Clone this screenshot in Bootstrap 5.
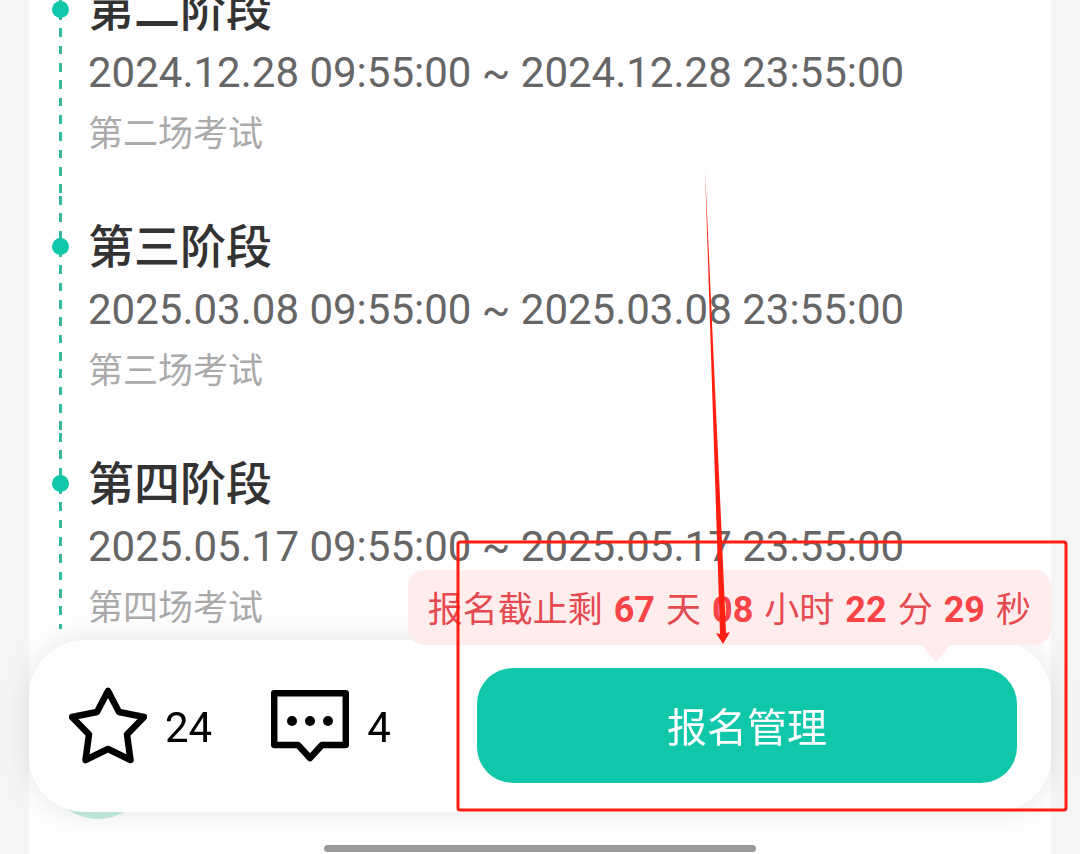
<!DOCTYPE html>
<html lang="zh-CN">
<head>
<meta charset="utf-8">
<meta name="viewport" content="width=device-width, initial-scale=1">
<title>报名管理</title>
<link rel="stylesheet" href="https://cdn.jsdelivr.net/npm/bootstrap@5.3.0/dist/css/bootstrap.min.css">
<style>
  :root { --brand: #10c7a9; --gutter: 29px; --alert: #f94346; --mark-red: #ff1f12; }
  body { background: #f5f5f6; font-family: Roboto, "Noto Sans CJK SC", sans-serif; overflow: hidden; }
  .panel { margin: 0 var(--gutter); background: #fefefe; }
  .stages { margin-top: -41px; }
  .stage { position: relative; padding: 20px 0 31px 59px; }
  .stage:last-child { padding-bottom: 0; }
  .stage::before {
    content: ""; position: absolute; left: 30px; top: 0; bottom: 0; width: 3px;
    background: repeating-linear-gradient(#35b89c 0 9px, transparent 9px 17px, #35b89c 17px 26px,
      transparent 26px 35px, #35b89c 35px 43px, transparent 43px 52px);
  }
  .stage:last-child::before { bottom: 10px; }
  .stage::after {
    content: ""; position: absolute; left: 23px; top: 42px; width: 17px; height: 17px;
    border-radius: 50%; background: var(--brand);
  }
  .stage h2 { font-size: 46px; line-height: 62px; font-weight: 500; color: #333; }
  .stage-time { font-size: 42px; line-height: 64px; color: #666; }
  .stage-note { font-size: 35px; line-height: 60px; color: #aaa; }
  .next-section { padding: 76px 0 0 17px; }
  .next-dot { width: 104px; height: 104px; background: #c4eddf; }
  .action-bar {
    margin: 0 var(--gutter) 42px; padding: 28px 34px 29px 40px; border-radius: 56px;
    background: #fefefe; box-shadow: 0 0 28px rgba(0, 0, 0, .1);
  }
  .action { gap: 18px; font-size: 42px; line-height: 64px; color: #000; }
  .action span { padding-top: 5px; }
  .action svg { width: 78px; height: 78px; fill: none; stroke: #000; stroke-width: 6.5; stroke-linejoin: round; }
  .action-set { gap: 59px; margin-right: 86px; }
  .btn-manage {
    --bs-btn-bg: var(--brand); --bs-btn-color: #fff; --bs-btn-hover-bg: #0eb79b; --bs-btn-hover-color: #fff;
    --bs-btn-border-radius: 36px; --bs-btn-border-width: 0; --bs-btn-font-size: 40px;
    height: 115px; padding: 6px 0 0;
  }
  .countdown {
    bottom: 167px; right: 0; padding: 6px 20px 0; gap: 11px; border-radius: 16px;
    background: #ffedee; color: #e54a50; font-size: 35px; line-height: 69px; white-space: nowrap;
  }
  .countdown b { color: var(--alert); font-size: 36px; }
  .countdown::after {
    content: ""; position: absolute; top: 100%; right: 101px;
    border: solid transparent; border-width: 18px 14px 0; border-top-color: #ffedee;
  }
  .callout { right: -17px; bottom: 0; width: 612px; height: 646px; pointer-events: none; }
  .home-indicator { width: 40%; height: 7px; bottom: 2px; background: #999; }
</style>
</head>
<body>
<main class="panel min-vh-100 d-flex flex-column">
  <ol class="stages list-unstyled mb-0">
    <li class="stage">
      <h2 class="mb-0">第二阶段</h2>
      <div class="stage-time">2024.12.28 09:55:00 ~ 2024.12.28 23:55:00</div>
      <div class="stage-note">第二场考试</div>
    </li>
    <li class="stage">
      <h2 class="mb-0">第三阶段</h2>
      <div class="stage-time">2025.03.08 09:55:00 ~ 2025.03.08 23:55:00</div>
      <div class="stage-note">第三场考试</div>
    </li>
    <li class="stage">
      <h2 class="mb-0">第四阶段</h2>
      <div class="stage-time">2025.05.17 09:55:00 ~ 2025.05.17 23:55:00</div>
      <div class="stage-note">第四场考试</div>
    </li>
  </ol>
  <div class="next-section"><div class="next-dot rounded-circle"></div></div>
</main>

<footer class="fixed-bottom">
  <div class="action-bar position-relative d-flex align-items-center">
    <div class="action-set d-flex">
      <button type="button" class="action btn border-0 p-0 d-flex align-items-center" aria-label="收藏 24">
        <svg viewBox="0 0 78 78" aria-hidden="true"><path d="M39 4 50 25 75 30 58 47.500 61.500 73 39 62 16.500 73 20 47.500 3 30 28 25Z"/></svg>
        <span>24</span>
      </button>
      <button type="button" class="action btn border-0 p-0 d-flex align-items-center" aria-label="评论 4">
        <svg viewBox="0 0 78 78" aria-hidden="true"><path d="M3.200 6.200H74.800V58H51L39 71 27 58H3.200Z"/><g fill="#000" stroke="none"><circle cx="21" cy="34" r="5"/><circle cx="39" cy="34" r="5"/><circle cx="57" cy="34" r="5"/></g></svg>
        <span>4</span>
      </button>
    </div>
    <button type="button" class="btn btn-manage flex-grow-1">报名管理</button>
    <div class="countdown position-absolute d-flex">
      <span>报名截止剩</span><b>67</b><span>天</span><b>08</b><span>小时</span><b>22</b><span>分</span><b>29</b><span>秒</span>
    </div>
    <svg class="callout position-absolute" viewBox="0 0 612 646" aria-hidden="true">
      <rect x="2" y="376" width="608" height="268" rx="2" fill="none" stroke="#ff1f12" stroke-width="3"/>
      <path d="M249 3 266 375 270 467 274 466 267 478 260 467 264 468 261 375Z" fill="#ff1f12"/>
    </svg>
  </div>
  <div class="home-indicator position-absolute start-50 translate-middle-x rounded-pill"></div>
</footer>
<script src="https://cdn.jsdelivr.net/npm/bootstrap@5.3.0/dist/js/bootstrap.bundle.min.js"></script>
</body>
</html>
